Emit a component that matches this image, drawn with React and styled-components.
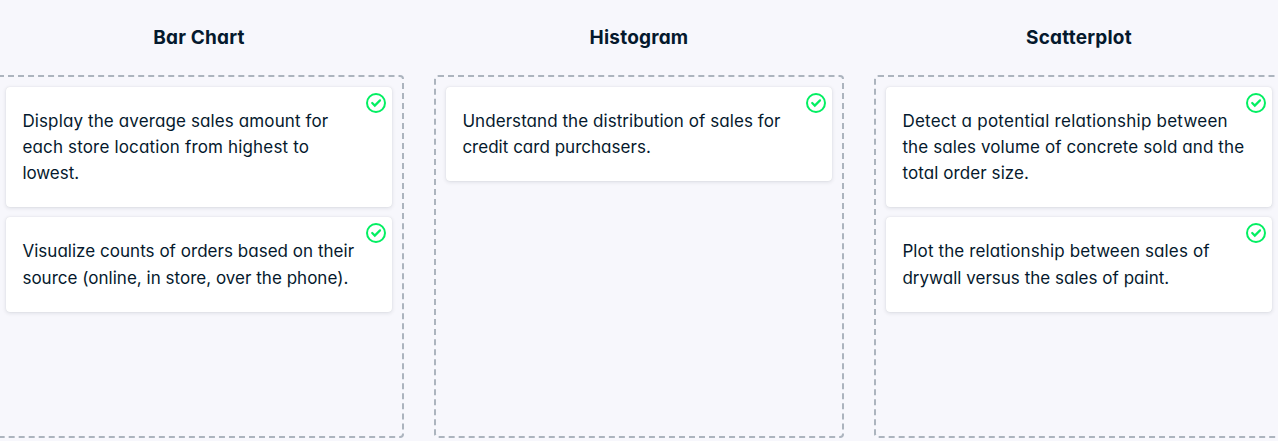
import React from 'react';
import styled, { createGlobalStyle } from 'styled-components';

const GlobalStyle = createGlobalStyle`
  *, *::before, *::after { box-sizing: border-box; }
  body {
    margin: 0;
    background: #f7f7fc;
    color: #05192d;
    font-family: Inter, "Liberation Sans", sans-serif;
    font-feature-settings: "cv11" 1;
    overflow: hidden;
  }
`;

const Board = styled.main`
  display: flex;
  gap: 30px;
  width: 1290px;
  height: 441px;
  margin-left: -6px;
`;

const Column = styled.section`
  display: flex;
  flex-direction: column;
  flex: 0 0 410px;
`;

const Heading = styled.h2`
  margin: 0;
  height: 75px;
  line-height: 75px;
  text-align: center;
  font-size: 19px;
  font-weight: 700;
  letter-spacing: 0.2px;
`;

const DropZone = styled.div`
  display: flex;
  flex-direction: column;
  gap: 10px;
  height: 363px;
  padding: 10px;
  border: 2px dashed #acb4be;
  border-radius: 4px;
`;

const Card = styled.article`
  position: relative;
  height: ${(p) => (p.$lines === 3 ? 120.4 : 94.2)}px;
  flex: none;
  padding: 21px 16.4px;
  border-radius: 4px;
  background: #fff;
  box-shadow: 0 0 1px rgba(5, 25, 45, 0.12), 0 1px 4px rgba(5, 25, 45, 0.12);
`;

const Line = styled.span`
  display: block;
  width: max-content;
  line-height: 26.2px;
  font-size: 17px;
  white-space: nowrap;
  letter-spacing: ${(p) => p.$tracking || 0}px;
`;

const Badge = styled.svg`
  position: absolute;
  top: 6px;
  right: 6px;
  width: 20px;
  height: 20px;
`;

const CheckBadge = () => (
  <Badge viewBox="0 0 20 20" fill="none" stroke="#03ef62" strokeWidth="2">
    <circle cx="10" cy="10" r="9" />
    <path d="M6.2 10 8.8 12.6 14 7.4" strokeWidth="2.2" strokeLinecap="round" />
  </Badge>
);

const columns = [
  {
    title: 'Bar Chart',
    cards: [
      [
        ['Display the average sales amount for', 0.12],
        ['each store location from highest to', 0.16],
        ['lowest.', -0.05],
      ],
      [
        ['Visualize counts of orders based on their', 0.03],
        ['source (online, in store, over the phone).', 0.02],
      ],
    ],
  },
  {
    title: 'Histogram',
    cards: [
      [
        ['Understand the distribution of sales for', 0.06],
        ['credit card purchasers.', 0.02],
      ],
    ],
  },
  {
    title: 'Scatterplot',
    cards: [
      [
        ['Detect a potential relationship between', 0.24],
        ['the sales volume of concrete sold and the', 0.11],
        ['total order size.', 0.09],
      ],
      [
        ['Plot the relationship between sales of', 0.12],
        ['drywall versus the sales of paint.', 0.02],
      ],
    ],
  },
];

export default function App() {
  return (
    <>
      <GlobalStyle />
      <Board>
        {columns.map(({ title, cards }) => (
          <Column key={title}>
            <Heading>{title}</Heading>
            <DropZone>
              {cards.map((lines) => (
                <Card key={lines[0][0]} $lines={lines.length}>
                  {lines.map(([text, tracking]) => (
                    <Line key={text} $tracking={tracking}>{text}</Line>
                  ))}
                  <CheckBadge />
                </Card>
              ))}
            </DropZone>
          </Column>
        ))}
      </Board>
    </>
  );
}
